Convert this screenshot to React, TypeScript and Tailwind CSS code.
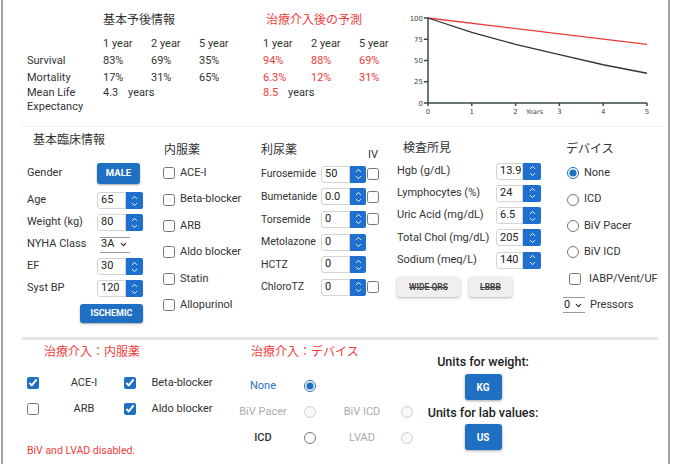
import { ChevronDown, ChevronUp } from "lucide-react";

const RED = "text-[#ee3d3a]";

// Blue up/down stepper glued to the right side of a number box
function Stepper({ w }: { w: string }) {
  return (
    <div className={`flex h-full flex-col items-center justify-center rounded-r-[2px] bg-[#1f6fd0] text-white ${w}`}>
      <ChevronUp size={9} strokeWidth={2.5} className="-mb-[1px]" />
      <ChevronDown size={9} strokeWidth={2.5} className="-mt-[1px]" />
    </div>
  );
}

function NumField({ value, box, step }: { value: string; box: string; step: string }) {
  return (
    <div className="flex h-[17px] items-stretch">
      <div className={`flex items-center rounded-l-[3px] border border-[#d4d4d4] bg-white pl-[3px] text-[11px] text-[#222] ${box}`}>
        {value}
      </div>
      <Stepper w={step} />
    </div>
  );
}

function Check({ on = false }: { on?: boolean }) {
  return (
    <input
      type="checkbox"
      defaultChecked={on}
      className="m-0 h-[12px] w-[12px] shrink-0 accent-[#1f6fc2]"
    />
  );
}

function Radio({ on = false, off = false }: { on?: boolean; off?: boolean }) {
  return (
    <input
      type="radio"
      defaultChecked={on}
      disabled={off}
      className="m-0 h-[12px] w-[12px] shrink-0 accent-[#1f6fc2]"
    />
  );
}

function Survival() {
  const pts = [100, 83, 69, 57, 45, 35];
  const x = (i: number) => 21 + i * 43.8;
  const y = (v: number) => 95 - v * 0.85;
  const curve = pts.map((v, i) => `${x(i)},${y(v)}`).join(" ");
  return (
    <svg width="255" height="112" viewBox="0 0 255 112" className="mt-[8px] shrink-0">
      <g fontFamily="DejaVu Sans, sans-serif" fontSize="7" fill="#444">
        {[100, 75, 50, 25, 0].map((v) => (
          <text key={v} x="16" y={y(v) + 2.5} textAnchor="end">
            {v}
          </text>
        ))}
        {[0, 1, 2, 3, 4, 5].map((i) => (
          <text key={i} x={x(i)} y="106" textAnchor="middle">
            {i}
          </text>
        ))}
        <text x="119" y="106" fontSize="6.5">
          Years
        </text>
      </g>
      <g stroke="#3b4948" strokeWidth="1.5">
        {[100, 75, 50, 25, 0].map((v) => (
          <line key={v} x1="17" x2="21" y1={y(v)} y2={y(v)} />
        ))}
        {[0, 1, 2, 3, 4, 5].map((i) => (
          <line key={i} x1={x(i)} x2={x(i)} y1="95" y2="98" />
        ))}
        <line x1="21" x2="21" y1="10" y2="95" />
        <line x1="21" x2="240" y1="95" y2="95" />
      </g>
      <line x1="21" y1={y(100)} x2="240" y2={y(69)} stroke="#f03a3a" strokeWidth="1.3" />
      <polyline points={curve} fill="none" stroke="#333" strokeWidth="1.3" />
    </svg>
  );
}

export default function App() {
  return (
    <div className="h-[464px] w-[675px] overflow-hidden bg-white text-[11px] text-[#333] [font-family:Roboto,'Noto_Sans_CJK_JP',sans-serif]">
      <div className="ml-[1px] mr-[5px] h-full border-x-2 border-[#a3a3a3]">
        {/* prognosis tables + chart */}
        <div className="flex h-[126px] items-start pl-[24px]">
          <div>
            <div className="ml-[76px] mt-[12px] h-[16px] text-[12px] leading-[16px]">基本予後情報</div>
            <div className="mt-[7px] grid grid-cols-[76px_48px_48px_48px] leading-[17px]">
              <div />
              <div>1 year</div>
              <div>2 year</div>
              <div>5 year</div>
              <div>Survival</div>
              <div>83%</div>
              <div>69%</div>
              <div>35%</div>
              <div>Mortality</div>
              <div>17%</div>
              <div>31%</div>
              <div>65%</div>
              <div className="leading-[14px]">Mean Life Expectancy</div>
              <div className="col-span-3 whitespace-nowrap leading-[14px]">
                <span className="inline-block w-[25px]">4.3</span>years
              </div>
            </div>
          </div>

          <div className="ml-[16px]">
            <div className={`ml-[3px] mt-[12px] h-[16px] text-[12px] leading-[16px] ${RED}`}>治療介入後の予測</div>
            <div className="mt-[7px] grid grid-cols-[48px_48px_48px] leading-[17px]">
              <div>1 year</div>
              <div>2 year</div>
              <div>5 year</div>
              <div className={RED}>94%</div>
              <div className={RED}>88%</div>
              <div className={RED}>69%</div>
              <div className={RED}>6.3%</div>
              <div className={RED}>12%</div>
              <div className={RED}>31%</div>
              <div className="col-span-3 leading-[14px]">
                <span className={`inline-block w-[25px] ${RED}`}>8.5</span>years
              </div>
            </div>
          </div>

          <Survival />
        </div>

        {/* baseline inputs */}
        <div className="ml-[19px] mr-[4px] h-px bg-[#ededed]" />
        <div className="flex h-[210px] pl-[24px]">
          <div className="w-[136px]">
            <div className="ml-[6px] mt-[5px] h-[16px] text-[12px] leading-[16px]">基本臨床情報</div>
            <div className="mt-[15px] flex h-[21px] items-center">
              <div className="w-[70px]">Gender</div>
              <button className="h-[21px] w-[43px] rounded-[3px] bg-[#1f6fc2] text-[9.5px] font-bold text-white shadow-[0_1px_2px_rgba(0,0,0,0.35)]">
                MALE
              </button>
            </div>
            <div className="mt-[8px] flex flex-col gap-[5px]">
              <div className="flex h-[17px] items-center">
                <div className="w-[70px]">Age</div>
                <NumField value="65" box="w-[29px]" step="w-[17px]" />
              </div>
              <div className="flex h-[17px] items-center">
                <div className="w-[70px]">Weight (kg)</div>
                <NumField value="80" box="w-[29px]" step="w-[17px]" />
              </div>
              <div className="flex h-[17px] items-center">
                <div className="w-[73px]">NYHA Class</div>
                <div className="flex h-[16px] w-[30px] items-center border-y border-[#9a9a9a] pl-[1px] text-[#222]">
                  3A
                  <ChevronDown size={9} strokeWidth={3} className="ml-[5px]" />
                </div>
              </div>
              <div className="flex h-[17px] items-center">
                <div className="w-[70px]">EF</div>
                <NumField value="30" box="w-[29px]" step="w-[17px]" />
              </div>
              <div className="flex h-[17px] items-center">
                <div className="w-[70px]">Syst BP</div>
                <NumField value="120" box="w-[29px]" step="w-[17px]" />
              </div>
            </div>
            <button className="ml-[53px] mt-[7px] h-[19px] w-[63px] rounded-[3px] bg-[#1f6fc2] text-[9px] font-bold text-white shadow-[0_1px_2px_rgba(0,0,0,0.35)]">
              ISCHEMIC
            </button>
          </div>

          <div className="w-[98px]">
            <div className="ml-[1px] mt-[15px] h-[16px] text-[12px] leading-[16px]">内服薬</div>
            <div className="mt-[2px]">
              {["ACE-I", "Beta-blocker", "ARB", "Aldo blocker", "Statin", "Allopurinol"].map((d) => (
                <div key={d} className="flex h-[26.4px] items-center gap-[5px]">
                  <Check />
                  <span>{d}</span>
                </div>
              ))}
            </div>
          </div>

          <div className="w-[136px]">
            <div className="mt-[15px] flex h-[21px] items-start">
              <div className="w-[107px] text-[12px] leading-[16px]">利尿薬</div>
              <div className="mt-[5px] leading-[16px]">IV</div>
            </div>
            {[
              ["Furosemide", "50", true],
              ["Bumetanide", "0.0", true],
              ["Torsemide", "0", true],
              ["Metolazone", "0", false],
              ["HCTZ", "0", false],
              ["ChloroTZ", "0", true],
            ].map(([name, v, iv]) => (
              <div key={name as string} className="flex h-[22.6px] items-center">
                <div className="w-[60px] whitespace-nowrap text-[10.5px]">{name}</div>
                <NumField value={v as string} box="w-[29px]" step="w-[16px]" />
                {iv ? (
                  <div className="ml-[1px] flex">
                    <Check />
                  </div>
                ) : null}
              </div>
            ))}
          </div>

          <div className="w-[166px]">
            <div className="ml-[6px] mt-[13px] h-[16px] text-[12px] leading-[16px]">検査所見</div>
            <div className="mt-[4px]">
              {[
                ["Hgb (g/dL)", "13.9"],
                ["Lymphocytes (%)", "24"],
                ["Uric Acid (mg/dL)", "6.5"],
                ["Total Chol (mg/dL)", "205"],
                ["Sodium (meq/L)", "140"],
              ].map(([name, v]) => (
                <div key={name} className="flex h-[22.25px] items-center">
                  <div className="w-[99px] whitespace-nowrap">{name}</div>
                  <NumField value={v} box="w-[27px]" step="w-[18px]" />
                </div>
              ))}
            </div>
            <div className="mt-[6px] flex gap-[9px]">
              <button className="h-[20px] w-[63px] rounded-[3px] bg-[#efefef] text-[8.5px] font-bold text-[#444] line-through shadow-[0_1px_3px_rgba(0,0,0,0.3)]">
                WIDE QRS
              </button>
              <button className="h-[20px] w-[43px] rounded-[3px] bg-[#efefef] text-[8.5px] font-bold text-[#444] line-through shadow-[0_1px_3px_rgba(0,0,0,0.3)]">
                LBBB
              </button>
            </div>
          </div>

          <div className="flex-1">
            <div className="ml-[3px] mt-[14px] h-[16px] text-[12px] leading-[16px]">デバイス</div>
            <div className="mt-[3px]">
              {["None", "ICD", "BiV Pacer", "BiV ICD"].map((d, i) => (
                <div key={d} className="flex h-[26.4px] items-center">
                  <div className="ml-[4px] flex">
                    <Radio on={i === 0} />
                  </div>
                  <span className="ml-[5px]">{d}</span>
                </div>
              ))}
              <div className="flex h-[26.4px] items-center">
                <div className="ml-[6px] flex">
                  <Check />
                </div>
                <span className="ml-[8px]">IABP/Vent/UF</span>
              </div>
              <div className="flex h-[26.4px] items-center">
                <div className="flex h-[16px] w-[22px] items-center border-y border-[#9a9a9a] pl-[1px] text-[#222]">
                  0
                  <ChevronDown size={9} strokeWidth={3} className="ml-[4px]" />
                </div>
                <span className="ml-[5px]">Pressors</span>
              </div>
            </div>
          </div>
        </div>

        {/* treatment scenario */}
        <div className="ml-[19px] h-[3px] w-[636px] bg-[#e6e6e6]" />
        <div className="flex pl-[24px]">
          <div className="w-[206px]">
            <div className={`ml-[17px] mt-[4px] h-[16px] text-[12px] leading-[16px] ${RED}`}>治療介入：内服薬</div>
            <div className="mt-[10px]">
              <div className="flex h-[26px] items-center">
                <Check on />
                <span className="w-[85px] pl-[5px] text-center">ACE-I</span>
                <Check on />
                <span className="w-[92px] text-center">Beta-blocker</span>
              </div>
              <div className="flex h-[26px] items-center">
                <Check />
                <span className="w-[85px] pl-[5px] text-center">ARB</span>
                <Check on />
                <span className="w-[92px] text-center">Aldo blocker</span>
              </div>
            </div>
            <div className={`mt-[22px] text-[10.5px] leading-[14px] ${RED}`}>BiV and LVAD disabled.</div>
          </div>

          <div className="w-[187px]">
            <div className={`ml-[18px] mt-[4px] h-[16px] text-[12px] leading-[16px] ${RED}`}>治療介入：デバイス</div>
            <div className="mt-[13px]">
              <div className="flex h-[26px] items-center">
                <span className="w-[60px] text-center text-[#2a6fc4]">None</span>
                <div className="flex w-[34px] justify-center">
                  <Radio on />
                </div>
              </div>
              <div className="flex h-[26px] items-center text-[#ababab]">
                <span className="w-[60px] text-center">BiV Pacer</span>
                <div className="flex w-[34px] justify-center">
                  <Radio off />
                </div>
                <span className="w-[70px] text-center">BiV ICD</span>
                <div className="flex w-[20px] justify-center">
                  <Radio off />
                </div>
              </div>
              <div className="flex h-[26px] items-center">
                <span className="w-[60px] text-center font-medium text-[#333]">ICD</span>
                <div className="flex w-[34px] justify-center">
                  <Radio />
                </div>
                <span className="w-[70px] text-center text-[#ababab]">LVAD</span>
                <div className="flex w-[20px] justify-center">
                  <Radio off />
                </div>
              </div>
            </div>
          </div>

          <div className="flex w-[126px] flex-col items-center">
            <div className="mt-[14px] whitespace-nowrap text-[12.5px] font-medium leading-[16px] text-[#222]">Units for weight:</div>
            <button className="mt-[4px] h-[26px] w-[37px] rounded-[3px] bg-[#1f6fc2] text-[10px] font-bold text-white shadow-[0_1px_3px_rgba(0,0,0,0.35)]">
              KG
            </button>
            <div className="mt-[5px] whitespace-nowrap text-[12.5px] font-medium leading-[16px] text-[#222]">Units for lab values:</div>
            <button className="mt-[3px] h-[26px] w-[37px] rounded-[3px] bg-[#1f6fc2] text-[10px] font-bold text-white shadow-[0_1px_3px_rgba(0,0,0,0.35)]">
              US
            </button>
          </div>
        </div>
      </div>
    </div>
  );
}
